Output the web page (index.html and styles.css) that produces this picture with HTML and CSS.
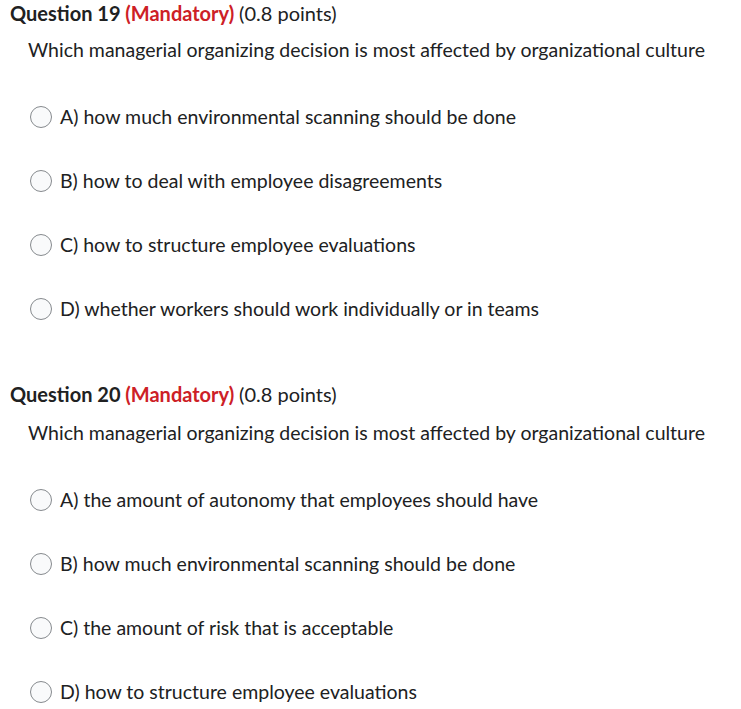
FILE: index.html
```html
<!DOCTYPE html>
<html>
<head>
<meta charset="utf-8">
<link rel="stylesheet" href="styles.css">
</head>
<body>
<div class="page">
  <section class="question">
    <h2 class="q-title">Question 19 <span class="mand">(Mandatory)</span> <span class="pts">(0.8 points)</span></h2>
    <p class="q-text">Which managerial organizing decision is most affected by organizational culture</p>
    <div class="options">
      <label class="opt"><span class="radio"></span><span>A) how much environmental scanning should be done</span></label>
      <label class="opt"><span class="radio"></span><span>B) how to deal with employee disagreements</span></label>
      <label class="opt"><span class="radio"></span><span>C) how to structure employee evaluations</span></label>
      <label class="opt"><span class="radio"></span><span>D) whether workers should work individually or in teams</span></label>
    </div>
  </section>
  <section class="question second">
    <h2 class="q-title">Question 20 <span class="mand">(Mandatory)</span> <span class="pts">(0.8 points)</span></h2>
    <p class="q-text">Which managerial organizing decision is most affected by organizational culture</p>
    <div class="options">
      <label class="opt"><span class="radio"></span><span>A) the amount of autonomy that employees should have</span></label>
      <label class="opt"><span class="radio"></span><span>B) how much environmental scanning should be done</span></label>
      <label class="opt"><span class="radio"></span><span>C) the amount of risk that is acceptable</span></label>
      <label class="opt"><span class="radio"></span><span>D) how to structure employee evaluations</span></label>
    </div>
  </section>
</div>
</body>
</html>
```
FILE: styles.css
```css
html, body {
  margin: 0;
  padding: 0;
  background: #ffffff;
}
body {
  font-family: Lato, "Noto Sans", sans-serif;
  color: #202122;
  font-size: 19.5px;
}
.page {
  padding: 0 0 0 10px;
}
.question {
  display: flex;
  flex-direction: column;
}
.second {
  margin-top: 59px;
}
.q-title {
  margin: 0;
  font-size: 20px;
  line-height: 26px;
  font-weight: 700;
  color: #202122;
}
.mand {
  color: #cd2026;
}
.pts {
  font-weight: 400;
}
.q-text {
  margin: 11px 0 0 18px;
  line-height: 26px;
}
.second .q-text {
  margin-top: 13px;
}
.options {
  display: flex;
  flex-direction: column;
  gap: 38px;
  margin: 41px 0 0 20px;
}
.opt {
  display: flex;
  align-items: center;
  gap: 8px;
  line-height: 26px;
}
.radio {
  width: 20px;
  height: 20px;
  border: 1px solid #868a8e;
  border-radius: 50%;
  background: #f9fafb;
  flex: none;
}
```
